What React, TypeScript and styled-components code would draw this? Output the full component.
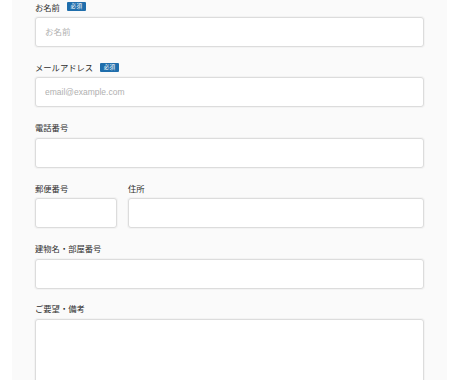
import React from "react";
import styled, { createGlobalStyle } from "styled-components";

const Global = createGlobalStyle`
  html, body { margin: 0; padding: 0; background: #ffffff; }
  body { font-family: "Liberation Sans", "Noto Sans CJK JP", sans-serif; color: #333; }
  * { box-sizing: border-box; }
`;

const Panel = styled.div`
  margin: 0 13px 0 12px;
  padding: 0 23px 0 23px;
  background: #fafafa;
  height: 380px;
  overflow: hidden;
  display: flex;
  flex-direction: column;
`;

const Field = styled.div<{ $first?: boolean }>`
  display: flex;
  flex-direction: column;
  flex-shrink: 0;
  margin-top: ${(p) => (p.$first ? "0.5px" : "0")};
  margin-bottom: 13.8px;
`;

const Row = styled.div`
  display: grid;
  flex-shrink: 0;
  grid-template-columns: 82px 1fr;
  column-gap: 11px;
  margin-bottom: 13.8px;
`;

const Cell = styled.div`
  display: flex;
  flex-direction: column;
`;

const Label = styled.label`
  display: flex;
  align-items: center;
  gap: 7px;
  font-family: "Noto Sans CJK JP", sans-serif;
  font-size: 8.3px;
  line-height: 12.6px;
  height: 12.6px;
  margin-bottom: 4px;
  color: #2e2e2e;
`;

const Badge = styled.span`
  display: inline-flex;
  align-items: center;
  justify-content: center;
  width: 19px;
  height: 9px;
  background: #1f6eac;
  color: #fff;
  font-size: 5.6px;
  line-height: 9px;
  border-radius: 1px;
  letter-spacing: 0.3px;
`;

const Input = styled.input`
  width: 100%;
  height: 30px;
  border: 1px solid #dcdcdc;
  border-radius: 3px;
  background: #fff;
  padding: 0 9px;
  font-family: "Liberation Sans", "Noto Sans CJK JP", sans-serif;
  font-size: 8.5px;
  color: #333;
  outline: none;
  box-shadow: 0 0 0 1px #f3f3f3;
  &::placeholder { color: #b0b0b0; }
`;

const TextArea = styled.textarea`
  width: 100%;
  height: 100px;
  border: 1px solid #dcdcdc;
  border-radius: 3px;
  background: #fff;
  padding: 8px 9px;
  font-family: "Liberation Sans", "Noto Sans CJK JP", sans-serif;
  font-size: 8.5px;
  resize: none;
  outline: none;
  box-shadow: 0 0 0 1px #f3f3f3;
`;

export default function App() {
  return (
    <>
      <Global />
      <Panel>
        <Field $first>
          <Label>お名前<Badge>必須</Badge></Label>
          <Input placeholder="お名前" />
        </Field>
        <Field>
          <Label>メールアドレス<Badge>必須</Badge></Label>
          <Input placeholder="email@example.com" />
        </Field>
        <Field>
          <Label>電話番号</Label>
          <Input />
        </Field>
        <Row>
          <Cell>
            <Label>郵便番号</Label>
            <Input />
          </Cell>
          <Cell>
            <Label>住所</Label>
            <Input />
          </Cell>
        </Row>
        <Field>
          <Label>建物名・部屋番号</Label>
          <Input />
        </Field>
        <Field>
          <Label>ご要望・備考</Label>
          <TextArea />
        </Field>
      </Panel>
    </>
  );
}
